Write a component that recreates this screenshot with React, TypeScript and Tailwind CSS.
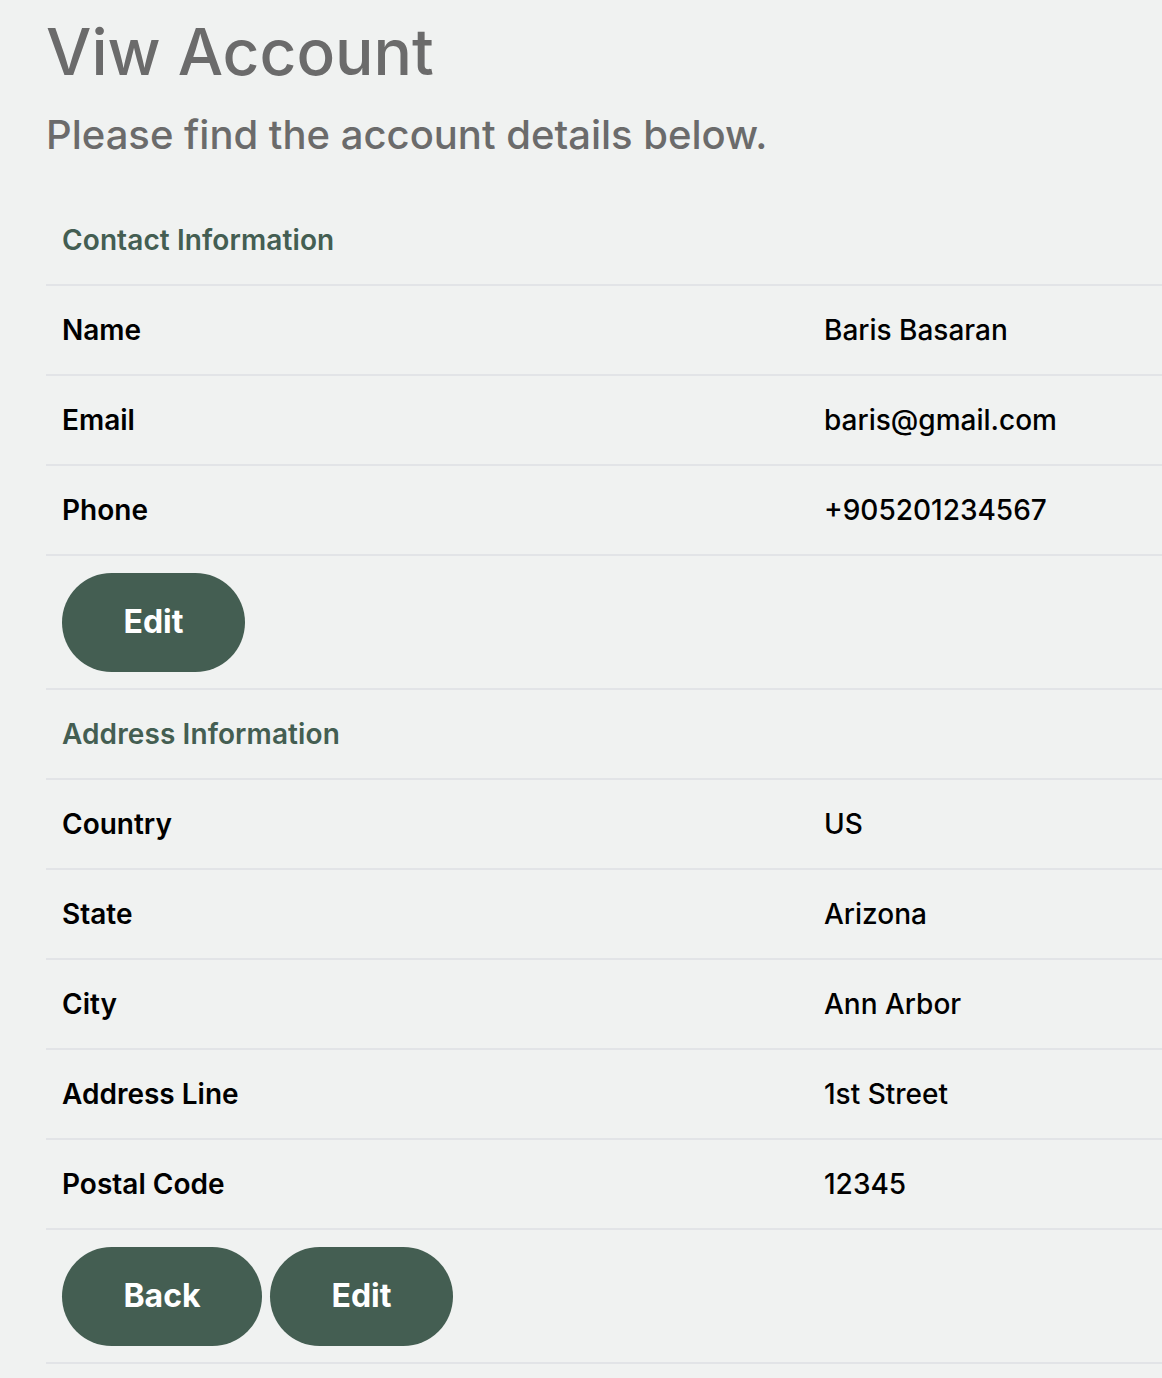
const contact = [
  { label: 'Name', value: 'Baris Basaran' },
  { label: 'Email', value: 'baris@gmail.com' },
  { label: 'Phone', value: '+905201234567' },
];

const address = [
  { label: 'Country', value: 'US' },
  { label: 'State', value: 'Arizona' },
  { label: 'City', value: 'Ann Arbor' },
  { label: 'Address Line', value: '1st Street' },
  { label: 'Postal Code', value: '12345' },
];

function SectionHeader({ title }: { title: string }) {
  return (
    <div className="h-[90px] flex items-center px-4 border-b-2 border-[#e2e4e7]">
      <span className="text-[28px] font-semibold tracking-[0.1px] text-[#445e52]">{title}</span>
    </div>
  );
}

function Row({ label, value }: { label: string; value: string }) {
  return (
    <div className="h-[90px] flex items-center border-b-2 border-[#e2e4e7] text-[28px] text-black">
      <div className="w-[762px] px-4 font-semibold">{label}</div>
      <div className="px-4 font-medium">{value}</div>
    </div>
  );
}

function PillButton({ children, width }: { children: React.ReactNode; width: string }) {
  return (
    <button
      className={`${width} h-[99px] rounded-full bg-[#445e52] text-white text-[32px] font-bold flex items-center justify-center`}
    >
      {children}
    </button>
  );
}

export default function App() {
  return (
    <div className="min-h-screen bg-[#f0f2f1] font-['Inter',sans-serif] pl-[46px] overflow-hidden">
      {/* Header */}
      <h1 className="pt-[13px] text-[64px] leading-[78px] font-medium text-[#6b6b6b]">Viw Account</h1>
      <p className="mt-[20px] text-[40px] leading-[48px] font-medium text-[#6b6b6b]">
        Please find the account details below.
      </p>

      <div className="mt-[37px]">
        {/* Contact */}
        <SectionHeader title="Contact Information" />
        {contact.map((r) => (
          <Row key={r.label} {...r} />
        ))}
        <div className="h-[134px] flex items-center px-4 border-b-2 border-[#e2e4e7]">
          <PillButton width="w-[183px]">Edit</PillButton>
        </div>

        {/* Address */}
        <SectionHeader title="Address Information" />
        {address.map((r) => (
          <Row key={r.label} {...r} />
        ))}
        <div className="h-[134px] flex items-center gap-2 px-4 border-b-2 border-[#e2e4e7]">
          <PillButton width="w-[200px]">Back</PillButton>
          <PillButton width="w-[183px]">Edit</PillButton>
        </div>
      </div>
    </div>
  );
}
